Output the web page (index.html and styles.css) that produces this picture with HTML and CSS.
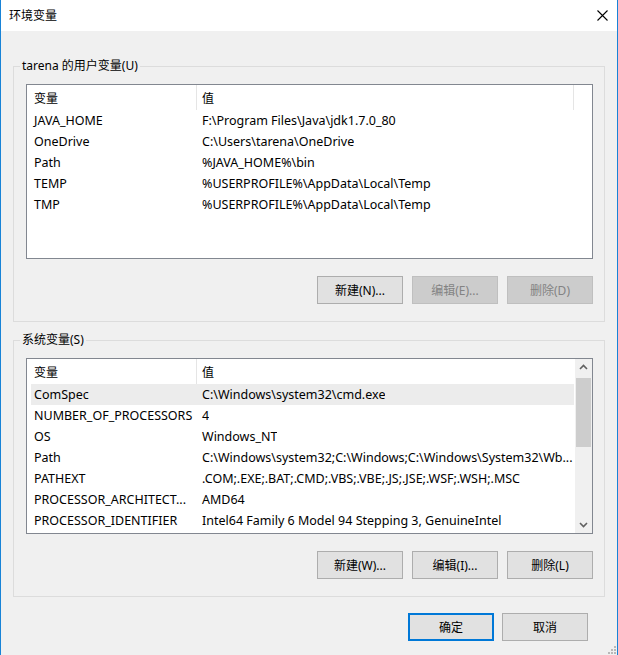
FILE: index.html
```html
<!DOCTYPE html>
<html lang="zh-CN">
<head>
    <meta charset="UTF-8">
    <title>环境变量</title>
    <link rel="stylesheet" href="styles.css">
</head>
<body>
    <div class="window">
        <div class="titlebar">
            <span class="title">环境变量</span>
            <svg class="close" width="11" height="11" viewBox="0 0 11 11">
                <path d="M0.5 0.5 L10.5 10.5 M10.5 0.5 L0.5 10.5" stroke="#000" stroke-width="1.1" fill="none"/>
            </svg>
        </div>

        <div class="dialog">
            <fieldset class="group">
                <legend>tarena 的用户变量(U)</legend>
                <div class="list list-user">
                    <div class="list-main">
                        <div class="list-head">
                            <div class="hcol hcol-name">变量</div>
                            <div class="hcol hcol-value">值</div>
                            <div class="hcol-rest"></div>
                        </div>
                        <div class="row"><span class="c-name">JAVA_HOME</span><span class="c-value">F:\Program Files\Java\jdk1.7.0_80</span></div>
                        <div class="row"><span class="c-name">OneDrive</span><span class="c-value">C:\Users\tarena\OneDrive</span></div>
                        <div class="row"><span class="c-name">Path</span><span class="c-value">%JAVA_HOME%\bin</span></div>
                        <div class="row"><span class="c-name">TEMP</span><span class="c-value">%USERPROFILE%\AppData\Local\Temp</span></div>
                        <div class="row"><span class="c-name">TMP</span><span class="c-value">%USERPROFILE%\AppData\Local\Temp</span></div>
                    </div>
                </div>
                <div class="btn-row">
                    <button class="btn">新建(N)...</button>
                    <button class="btn" disabled>编辑(E)...</button>
                    <button class="btn" disabled>删除(D)</button>
                </div>
            </fieldset>

            <fieldset class="group">
                <legend>系统变量(S)</legend>
                <div class="list list-system">
                    <div class="list-main">
                        <div class="list-head">
                            <div class="hcol hcol-name">变量</div>
                            <div class="hcol hcol-value">值</div>
                        </div>
                        <div class="row selected"><span class="c-name">ComSpec</span><span class="c-value">C:\Windows\system32\cmd.exe</span></div>
                        <div class="row"><span class="c-name">NUMBER_OF_PROCESSORS</span><span class="c-value">4</span></div>
                        <div class="row"><span class="c-name">OS</span><span class="c-value">Windows_NT</span></div>
                        <div class="row"><span class="c-name">Path</span><span class="c-value">C:\Windows\system32;C:\Windows;C:\Windows\System32\Wb...</span></div>
                        <div class="row"><span class="c-name">PATHEXT</span><span class="c-value">.COM;.EXE;.BAT;.CMD;.VBS;.VBE;.JS;.JSE;.WSF;.WSH;.MSC</span></div>
                        <div class="row"><span class="c-name">PROCESSOR_ARCHITECT...</span><span class="c-value">AMD64</span></div>
                        <div class="row"><span class="c-name">PROCESSOR_IDENTIFIER</span><span class="c-value">Intel64 Family 6 Model 94 Stepping 3, GenuineIntel</span></div>
                    </div>
                    <div class="scrollbar">
                        <svg class="arrow" width="17" height="17" viewBox="0 0 17 17">
                            <path d="M5 10 L8.5 6.5 L12 10" stroke="#606060" stroke-width="1.6" fill="none"/>
                        </svg>
                        <div class="track">
                            <div class="thumb"></div>
                        </div>
                        <svg class="arrow" width="17" height="17" viewBox="0 0 17 17">
                            <path d="M5 7 L8.5 10.5 L12 7" stroke="#606060" stroke-width="1.6" fill="none"/>
                        </svg>
                    </div>
                </div>
                <div class="btn-row">
                    <button class="btn">新建(W)...</button>
                    <button class="btn">编辑(I)...</button>
                    <button class="btn">删除(L)</button>
                </div>
            </fieldset>

            <div class="footer">
                <button class="btn btn-default">确定</button>
                <button class="btn">取消</button>
            </div>
        </div>

        <svg class="grip" width="12" height="12" viewBox="0 0 12 12">
            <rect x="9" y="3" width="2" height="2" fill="#b8b8b8"/>
            <rect x="6" y="6" width="2" height="2" fill="#b8b8b8"/>
            <rect x="9" y="6" width="2" height="2" fill="#b8b8b8"/>
            <rect x="3" y="9" width="2" height="2" fill="#b8b8b8"/>
            <rect x="6" y="9" width="2" height="2" fill="#b8b8b8"/>
            <rect x="9" y="9" width="2" height="2" fill="#b8b8b8"/>
        </svg>
    </div>
</body>
</html>
```

FILE: styles.css
```css
html, body {
    margin: 0;
    padding: 0;
    background: #f0f0f0;
}

body {
    font-family: "Noto Sans", "Noto Sans CJK SC", sans-serif;
    font-size: 12px;
    color: #000;
}

.window {
    position: relative;
    width: 616px;
    height: 655px;
    border-left: 1px solid #1883d7;
    border-right: 1px solid #1883d7;
    background: #f0f0f0;
    overflow: hidden;
}

.titlebar {
    height: 31px;
    background: #fff;
    display: flex;
    align-items: center;
    justify-content: space-between;
    padding: 0 9px 0 8px;
}

.title {
    font-size: 12px;
    line-height: 16px;
}

.close {
    display: block;
}

.dialog {
    padding-top: 27px;
}

.group {
    margin: 0 12px 10px 12px;
    padding: 0 5px 17px 6px;
    border: 1px solid #dcdcdc;
    min-width: 0;
}

.group legend {
    padding: 0 2px;
    line-height: 16px;
}

.list {
    margin: 10px 6px 0 6px;
    border: 1px solid #828790;
    background: #fff;
    display: flex;
    overflow: hidden;
}

.list-user {
    height: 173px;
}

.list-system {
    height: 174px;
}

.list-main {
    flex: 1;
    min-width: 0;
}

.list-head {
    display: flex;
    height: 25px;
    align-items: stretch;
}

.hcol {
    display: flex;
    align-items: center;
    border-right: 1px solid #e5e5e5;
    box-sizing: border-box;
}

.hcol-name {
    width: 170px;
    padding-left: 7px;
}

.hcol-value {
    width: 377px;
    padding-left: 5px;
}

.list-system .hcol-value {
    width: auto;
    flex: 1;
    border-right: none;
}

.hcol-rest {
    flex: 1;
}

.row {
    display: flex;
    align-items: center;
    height: 21px;
    margin-left: 4px;
    width: 543px;
    white-space: nowrap;
    font-size: 12.5px;
}

.row.selected {
    background: #ececec;
}

.c-name {
    width: 168px;
    padding-left: 3px;
    box-sizing: border-box;
    overflow: hidden;
}

.c-value {
    padding-left: 3px;
    overflow: hidden;
}

.scrollbar {
    width: 17px;
    margin-left: 1px;
    background: #f0f0f0;
    display: flex;
    flex-direction: column;
}

.arrow {
    display: block;
}

.track {
    flex: 1;
    padding: 2px 1px;
}

.thumb {
    height: 69px;
    background: #cdcdcd;
}

.btn-row {
    display: flex;
    justify-content: flex-end;
    gap: 9px;
    margin: 17px 6px 0 0;
}

.btn {
    width: 86px;
    height: 28px;
    padding: 0;
    border: 1px solid #adadad;
    background: #e1e1e1;
    font-family: "Noto Sans", "Noto Sans CJK SC", sans-serif;
    font-size: 12px;
    color: #000;
}

.btn:disabled {
    background: #cccccc;
    border-color: #bfbfbf;
    color: #838383;
}

.btn-default {
    border: 2px solid #0078d7;
}

.footer {
    display: flex;
    justify-content: flex-end;
    gap: 8px;
    margin-top: 16px;
    padding-right: 29px;
}

.grip {
    position: absolute;
    right: 0;
    bottom: 0;
}
```
